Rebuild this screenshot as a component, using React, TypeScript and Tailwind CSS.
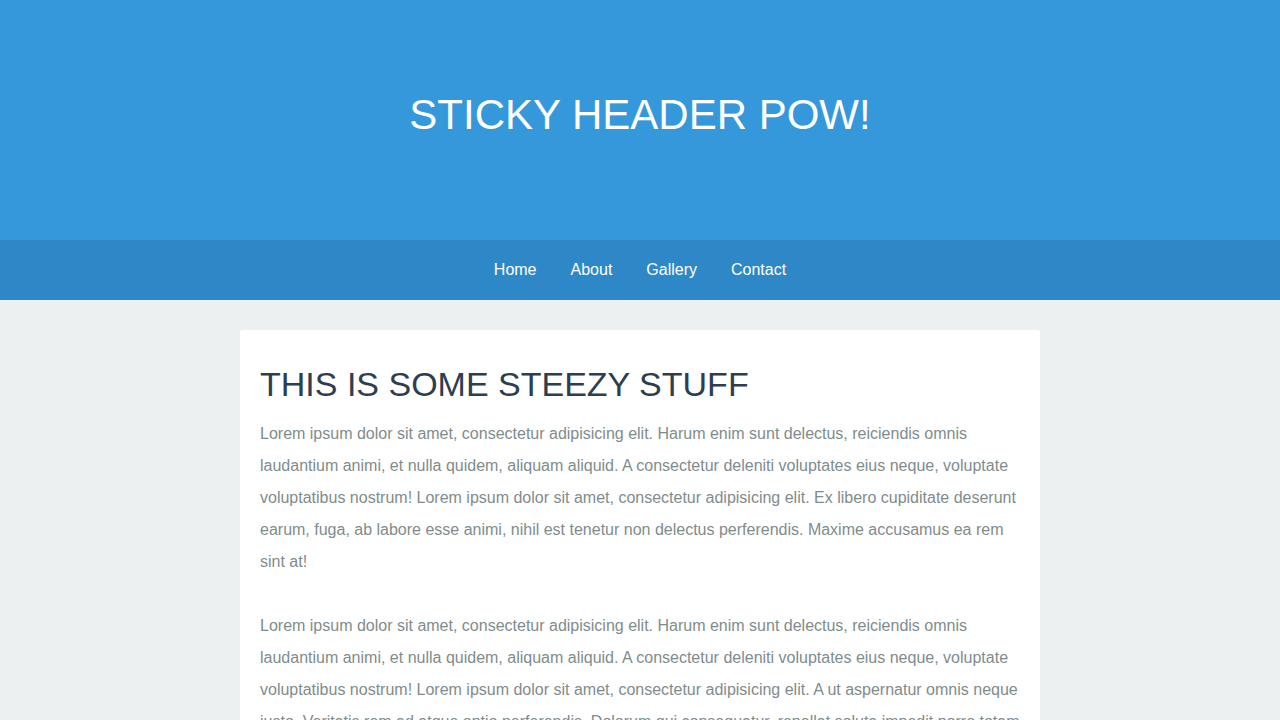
import React from "react";

const p1 =
  "Lorem ipsum dolor sit amet, consectetur adipisicing elit. Harum enim sunt delectus, reiciendis omnis laudantium animi, et nulla quidem, aliquam aliquid. A consectetur deleniti voluptates eius neque, voluptate voluptatibus nostrum! Lorem ipsum dolor sit amet, consectetur adipisicing elit. Ex libero cupiditate deserunt earum, fuga, ab labore esse animi, nihil est tenetur non delectus perferendis. Maxime accusamus ea rem sint at!";
const p2 =
  "Lorem ipsum dolor sit amet, consectetur adipisicing elit. Harum enim sunt delectus, reiciendis omnis laudantium animi, et nulla quidem, aliquam aliquid. A consectetur deleniti voluptates eius neque, voluptate voluptatibus nostrum! Lorem ipsum dolor sit amet, consectetur adipisicing elit. A ut aspernatur omnis neque iusto. Veritatis rem ad atque optio perferendis. Dolorum qui consequatur, repellat soluta impedit porro totam quos nam voluptatum, quasi dolore magni.";

export default function App() {
  return (
    <div
      className="min-h-screen bg-[#ecf0f1]"
      style={{ fontFamily: '"Liberation Sans", Arial, sans-serif' }}
    >
      <header className="h-[240px] bg-[#3498db] pt-[91px]">
        <h1 className="text-center text-[42px] leading-[48px] font-normal text-white">
          STICKY HEADER POW!
        </h1>
      </header>
      <nav className="h-[60px] bg-[#2e88c7] flex items-center justify-center">
        <ul className="flex gap-[34px] text-[16px] text-white">
          <li><a href="#">Home</a></li>
          <li><a href="#">About</a></li>
          <li><a href="#">Gallery</a></li>
          <li><a href="#">Contact</a></li>
        </ul>
      </nav>
      <main className="pt-[30px] pb-[30px]">
        <div className="mx-auto w-[800px] rounded-[3px] bg-white px-[20px] pt-[35px] pb-[20px]">
          <h2 className="text-[34px] leading-[39px] font-normal text-[#2c3e50] mb-[14px]">
            THIS IS SOME STEEZY STUFF
          </h2>
          <p className="text-[16px] leading-[32px] text-[#7f8c8d] mb-[32px]">{p1}</p>
          <p className="text-[16px] leading-[32px] text-[#7f8c8d] mb-[32px]">{p2}</p>
          <p className="text-[16px] leading-[32px] text-[#7f8c8d]">{p1}</p>
        </div>
      </main>
    </div>
  );
}
